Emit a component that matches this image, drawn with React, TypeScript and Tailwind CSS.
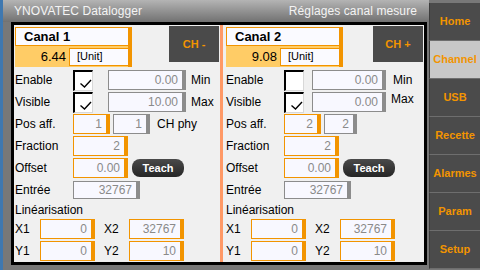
import clsx from "clsx";

type Side = {
  name: string;
  value: string;
  ch: string;
  enable: boolean;
  visible: boolean;
  min: string;
  max: string;
  pos: [string, string];
  wide: boolean;
};

const sides: Side[] = [
  { name: "Canal 1", value: "6.44", ch: "CH -", enable: true, visible: true, min: "0.00", max: "10.00", pos: ["1", "1"], wide: true },
  { name: "Canal 2", value: "9.08", ch: "CH +", enable: false, visible: true, min: "0.00", max: "0.00", pos: ["2", "2"], wide: false },
];

const menu = ["Home", "Channel", "USB", "Recette", "Alarmes", "Param", "Setup"];

function Field({ value, className, gray }: { value: string; className: string; gray?: boolean }) {
  return (
    <div
      className={clsx(
        "h-[20px] shrink-0 flex items-center justify-end pr-[4px] bg-[#f8f8ff] text-[12px] leading-none text-[#8a8a8a] border border-r-[4px]",
        gray ? "border-[#8c8c8c]" : "border-[#f29400]",
        className
      )}
    >
      {value}
    </div>
  );
}

function Check({ on }: { on: boolean }) {
  return (
    <div className="w-[20px] h-[21px] shrink-0 bg-white border-t-2 border-l-2 border-t-black border-l-black border-r border-b border-r-[#d8d8d8] border-b-[#d8d8d8]">
      {on && (
        <svg width="17" height="18" viewBox="0 0 17 18">
          <path d="M5.5 11.5 L9.5 15 L16 8" stroke="#000" strokeWidth="1.4" fill="none" />
        </svg>
      )}
    </div>
  );
}

function Label({ text, className = "w-[58px]" }: { text: string; className?: string }) {
  return <span className={clsx("shrink-0 text-[12px] leading-none text-black", className)}>{text}</span>;
}

function Column({ s }: { s: Side }) {
  return (
    <div className="flex flex-col">
      {/* header */}
      <div className="h-[44px] flex items-start justify-between">
        <div className="mt-[2px] flex">
          <div className="w-[113px] flex flex-col">
            <div className="h-[19px] bg-[#fafaff] border border-r-0 border-[#f29400] flex items-center pl-[8px] font-bold text-[13px] text-black">
              {s.name}
            </div>
            <div className="h-[21px] bg-[#ffcc66] flex items-center">
              <span className="w-[54px] text-right pr-[3px] text-[13px] text-black">{s.value}</span>
              <div className="flex-1 h-[18px] bg-[#fafaff] border border-r-0 border-[#f29400] flex items-center pl-[7px] text-[11px] text-black">
                [Unit]
              </div>
            </div>
          </div>
          <div className="w-[4px] bg-[#f29400]" />
        </div>
        <div className="mt-[1px] w-[50px] h-[36px] bg-[#4a4a4a] text-[#f29400] font-bold text-[11px] flex items-center justify-center">
          {s.ch}
        </div>
      </div>

      <div className="h-[22px] flex items-center">
        <Label text="Enable" />
        <Check on={s.enable} />
        <Field gray value={s.min} className={s.wide ? "ml-[15px] w-[78px]" : "ml-[8px] w-[74px]"} />
        <Label text="Min" className={s.wide ? "ml-[5px]" : "ml-[7px]"} />
      </div>
      <div className="h-[22px] flex items-center">
        <Label text="Visible" />
        <Check on={s.visible} />
        <Field gray value={s.max} className={s.wide ? "ml-[15px] w-[78px]" : "ml-[8px] w-[74px]"} />
        <Label text="Max" className={s.wide ? "ml-[5px]" : "ml-[5px] self-start mt-[2px]"} />
      </div>
      <div className="h-[22px] flex items-center">
        <Label text="Pos aff." />
        <Field value={s.pos[0]} className="w-[37px]" />
        <Field gray value={s.pos[1]} className={s.wide ? "ml-[3px] w-[37px]" : "ml-[3px] w-[33px]"} />
        {s.wide && <Label text="CH phy" className="ml-[7px]" />}
      </div>
      <div className="h-[22px] flex items-center">
        <Label text="Fraction" />
        <Field value="2" className="w-[55px]" />
      </div>
      <div className="h-[22px] flex items-center">
        <Label text="Offset" />
        <Field value="0.00" className="w-[55px]" />
        <div className="ml-[4px] w-[52px] h-[18px] rounded-[8px] bg-gradient-to-b from-[#4a4a4a] to-[#262626] text-white font-bold text-[11px] flex items-center justify-center">
          Teach
        </div>
      </div>
      <div className="h-[22px] flex items-center">
        <Label text="Entrée" />
        <Field gray value="32767" className="w-[67px] !h-[18px]" />
      </div>
      <div className="h-[17px] flex items-center">
        <Label text="Linéarisation" className="" />
      </div>
      <div className="h-[22px] flex items-center">
        <Label text="X1" className="w-[25px]" />
        <Field value="0" className="w-[55px]" />
        <Label text="X2" className="ml-[9px] w-[25px]" />
        <Field value="32767" className="w-[55px]" />
      </div>
      <div className="h-[22px] flex items-center">
        <Label text="Y1" className="w-[25px]" />
        <Field value="0" className="w-[55px]" />
        <Label text="Y2" className="ml-[9px] w-[25px]" />
        <Field value="10" className="w-[55px]" />
      </div>
    </div>
  );
}

export default function App() {
  return (
    <div className="w-[480px] h-[270px] flex bg-[#787878] font-['Liberation_Sans',Arial,sans-serif] overflow-hidden">
      <div className="w-[3px] bg-[#3f78b0]" />
      <div className="w-[426px] flex flex-col">
        <div className="h-[22px] flex items-center justify-between pl-[11px] pr-[12px] text-[12px] text-[#f4f4f4] tracking-[0.1px] bg-gradient-to-b from-[#b4b4b4] to-[#727272]">
          <span>YNOVATEC Datalogger</span>
          <span>Réglages canal mesure</span>
        </div>
        <div className="ml-[8px] w-[416px] h-[243px] border-[3px] border-black bg-[#f0f0f0] flex">
          <div className="w-[206px] pl-[1px] pr-[1px]">
            <Column s={sides[0]} />
          </div>
          <div className="w-[3px] bg-[#ff9966]" />
          <div className="w-[201px] pl-[3px] pr-[1px]">
            <Column s={sides[1]} />
          </div>
        </div>
      </div>
      <div className="w-[51px] pt-[3px] flex flex-col">
        {menu.map((m) => (
          <div
            key={m}
            className={clsx(
              "h-[38px] shrink-0 border-b border-l border-b-[#6e6e6e] border-l-[#3c3c3c] flex items-center justify-center text-[11px] font-bold text-[#f29400]",
              m === "Channel" ? "bg-[#c8c8c8]" : "bg-[#4b4b4b]"
            )}
          >
            {m}
          </div>
        ))}
      </div>
    </div>
  );
}
